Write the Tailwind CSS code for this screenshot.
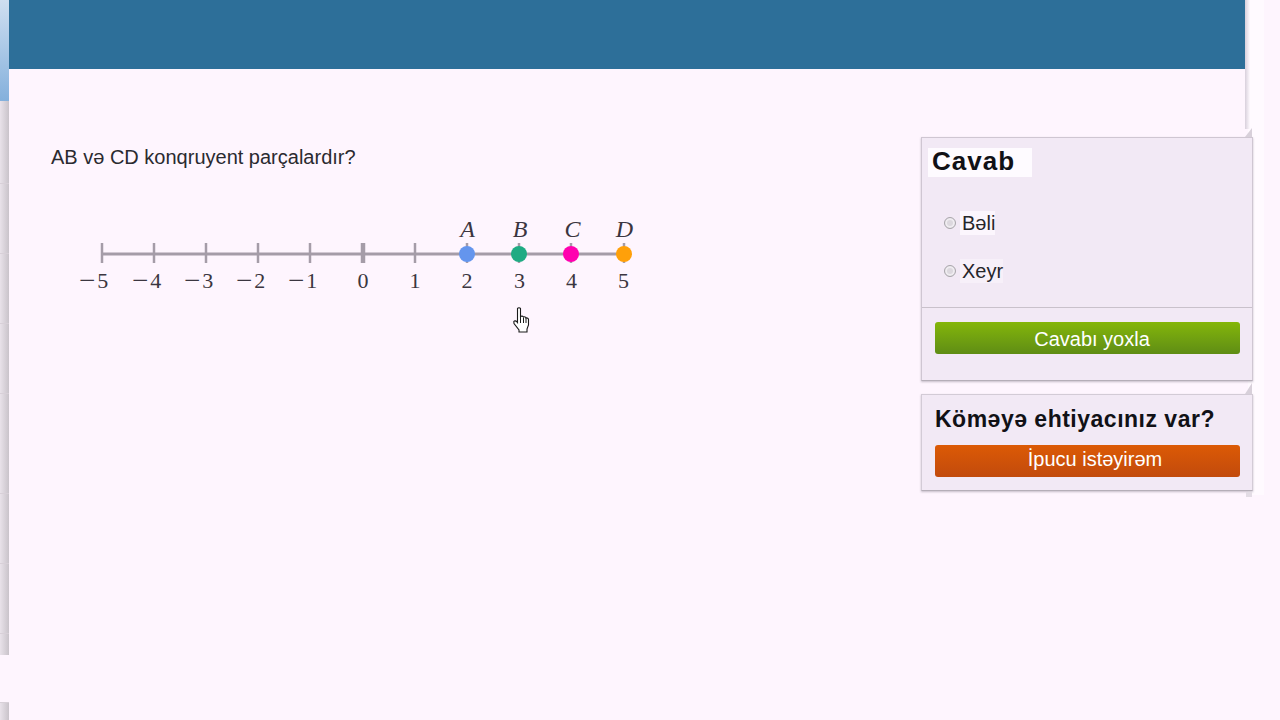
<!DOCTYPE html>
<html>
<head>
<meta charset="utf-8">
<script src="https://cdn.jsdelivr.net/npm/@tailwindcss/browser@4"></script>
</head>
<body class="w-[1280px] h-[720px] overflow-hidden bg-[#fef5fe] font-['Liberation_Sans',sans-serif]">
<div class="flex h-[720px] relative">
  <div class="absolute left-[1248px] top-0 w-[16px] h-[495px] bg-[#fffaff]"></div>
  <!-- left strip -->
  <div class="w-[9px] h-[720px] shrink-0 flex flex-col">
    <div class="h-[101px] bg-gradient-to-b from-[#cfdff0] to-[#84b0dc]"></div>
    <div class="h-[83px] border-b border-[#d8d0d8] bg-gradient-to-r from-[#e9e2ea] to-[#c9c3ca]"></div>
    <div class="h-[70px] border-b border-[#d8d0d8] bg-gradient-to-r from-[#e9e2ea] to-[#c9c3ca]"></div>
    <div class="h-[70px] border-b border-[#d8d0d8] bg-gradient-to-r from-[#e9e2ea] to-[#c9c3ca]"></div>
    <div class="h-[70px] border-b border-[#d8d0d8] bg-gradient-to-r from-[#e9e2ea] to-[#c9c3ca]"></div>
    <div class="h-[100px] border-b border-[#d8d0d8] bg-gradient-to-r from-[#e9e2ea] to-[#c9c3ca]"></div>
    <div class="h-[70px] border-b border-[#d8d0d8] bg-gradient-to-r from-[#e9e2ea] to-[#c9c3ca]"></div>
    <div class="h-[70px] border-b border-[#d8d0d8] bg-gradient-to-r from-[#e9e2ea] to-[#c9c3ca]"></div>
    <div class="h-[21px] bg-gradient-to-r from-[#e9e2ea] to-[#c9c3ca]"></div>
    <div class="h-[47px] bg-[#fef5fe]"></div>
    <div class="h-[18px] border-t border-[#d8d0d8] bg-gradient-to-r from-[#e9e2ea] to-[#c9c3ca]"></div>
  </div>
  <!-- main column -->
  <div class="w-[1236px] shrink-0 relative">
    <div class="h-[69px] bg-[#2d6f99]"></div>
    <div class="flex">
      <div class="w-[912px] shrink-0 pl-[42px] pt-[77px]">
        <p class="text-[20px] leading-[22px] text-[#2a2a30]">AB və CD konqruyent parçalardır?</p>
        <svg class="mt-[31px] -ml-[51px] block" width="700" height="100" viewBox="0 0 700 100">
          <g stroke="#a59ca8" fill="none">
            <line x1="101" y1="55" x2="624" y2="55" stroke-width="3"/>
            <g stroke-width="2.500">
              <line x1="102" y1="44" x2="102" y2="64"/>
              <line x1="154" y1="44" x2="154" y2="64"/>
              <line x1="206" y1="44" x2="206" y2="64"/>
              <line x1="258" y1="44" x2="258" y2="64"/>
              <line x1="310" y1="44" x2="310" y2="64"/>
              <line x1="415" y1="44" x2="415" y2="64"/>
              <line x1="467" y1="44" x2="467" y2="64"/>
              <line x1="519" y1="44" x2="519" y2="64"/>
              <line x1="571" y1="44" x2="571" y2="64"/>
              <line x1="624" y1="44" x2="624" y2="64"/>
            </g>
            <line x1="363" y1="44" x2="363" y2="64" stroke-width="4.500"/>
          </g>
          <circle cx="467" cy="55" r="8" fill="#6495ed"/>
          <circle cx="519" cy="55" r="8" fill="#1fab83"/>
          <circle cx="571" cy="55" r="8" fill="#ff00af"/>
          <circle cx="624" cy="55" r="8" fill="#ffa00a"/>
          <g font-family="'Liberation Serif',serif" font-size="22" fill="#3b3640">
            <text x="79" y="89"><tspan font-size="29" dy="2">−</tspan><tspan dx="2" dy="-2">5</tspan></text>
            <text x="132" y="89"><tspan font-size="29" dy="2">−</tspan><tspan dx="2" dy="-2">4</tspan></text>
            <text x="184" y="89"><tspan font-size="29" dy="2">−</tspan><tspan dx="2" dy="-2">3</tspan></text>
            <text x="236" y="89"><tspan font-size="29" dy="2">−</tspan><tspan dx="2" dy="-2">2</tspan></text>
            <text x="288" y="89"><tspan font-size="29" dy="2">−</tspan><tspan dx="2" dy="-2">1</tspan></text>
            <g text-anchor="middle">
              <text x="363" y="89">0</text>
              <text x="415" y="89">1</text>
              <text x="467" y="89">2</text>
              <text x="519.500" y="89">3</text>
              <text x="571.500" y="89">4</text>
              <text x="623.500" y="89">5</text>
              <g font-style="italic" font-size="24">
                <text x="467.500" y="38">A</text>
                <text x="520" y="38">B</text>
                <text x="572.500" y="38">C</text>
                <text x="624.500" y="38">D</text>
              </g>
            </g>
          </g>
        </svg>
      </div>
      <!-- sidebar -->
      <div class="w-[332px] shrink-0 pt-[68px] relative">
        <section class="relative h-[244px] border border-[#cfc6d2] border-b-[#b5aeb8] bg-[#f2e9f5] shadow-[0_1px_2px_rgba(90,80,100,0.35)]">
          <div class="absolute -top-[10px] right-0 w-0 h-0 border-l-[7px] border-l-transparent border-b-[9px] border-b-[#d8d0da]"></div>
          <h2 class="ml-[6px] mt-[10px] w-[104px] h-[29px] bg-[#fefbff] pl-[4px] text-[26px] leading-[27px] font-bold tracking-[1px] text-[#111116]">Cavab</h2>
          <div class="mt-[32px] ml-[22px] flex items-center gap-[6px] h-[28px]">
            <span class="w-[12px] h-[12px] rounded-full border border-[#a9a6ab] bg-[#dcd8de] shadow-[inset_0_0_0_2px_#efecf0]"></span>
            <span class="bg-[#fcf6fd] -ml-[2px] pl-[2px] text-[20px] leading-[24px] text-[#26262b]">Bəli</span>
          </div>
          <div class="mt-[20px] ml-[22px] flex items-center gap-[6px] h-[28px]">
            <span class="w-[12px] h-[12px] rounded-full border border-[#a9a6ab] bg-[#dcd8de] shadow-[inset_0_0_0_2px_#efecf0]"></span>
            <span class="bg-[#f7f0f9] -ml-[2px] pl-[2px] text-[20px] leading-[24px] text-[#26262b]">Xeyr</span>
          </div>
          <div class="mt-[22px] border-t border-[#c9c1cb]"></div>
          <div class="px-[13px] pt-[14px]">
            <button class="block w-[305px] h-[32px] rounded-[3px] bg-gradient-to-b from-[#84b608] to-[#5f8d14] text-white text-[20px] leading-[34px] text-center pl-[9px]">Cavabı yoxla</button>
          </div>
        </section>
        <section class="relative mt-[13px] h-[97px] border border-[#d3cbd6] border-b-[#b5aeb8] bg-[#f2e9f5] shadow-[0_1px_2px_rgba(90,80,100,0.35)]">
          <div class="absolute -top-[12px] right-0 w-0 h-0 border-l-[7px] border-l-transparent border-b-[11px] border-b-[#d8d0da]"></div>
          <div class="absolute -bottom-[7px] right-0 w-[6px] h-[5px] bg-[#e3dce5]"></div>
          <h2 class="ml-[13px] mt-[10px] text-[23px] leading-[28px] font-bold tracking-[0.5px] text-[#111116]">Köməyə ehtiyacınız var?</h2>
          <div class="px-[13px] pt-[12px]">
            <button class="block w-[305px] h-[32px] rounded-[3px] bg-gradient-to-b from-[#dc5a05] to-[#c24a0c] text-white text-[20px] leading-[28px] text-center pl-[15px] pb-[4px]">İpucu istəyirəm</button>
          </div>
        </section>
      </div>
    </div>
  </div>
  <div class="absolute left-[1245px] top-0 w-[5px] h-[129px] bg-gradient-to-r from-[#d8d0dc] to-[#fffaff]"></div>
  <div class="absolute left-[513px] top-[307px]">
    <svg width="17" height="26" viewBox="0 0 17 26">
      <path d="M4.500 1.500 C5 0.500 7 0.500 7.500 1.500 L7.500 9.500 C8.500 8.800 10 9 10.500 10 C11.500 9.500 12.800 10 13 11 C14.200 10.500 15.500 11.500 15.500 12.500 L15.500 18 L14 22 L14 25 L6 25 L6 23 L1 16.500 L0.800 14.500 C1.500 13.500 3 13.500 4.500 15.500 Z" fill="#fff" stroke="#1a1a1a" stroke-width="1.100"/>
      <path d="M7.500 10 V16 M10.500 10.500 V16 M13 11 V16" stroke="#1a1a1a" fill="none"/>
    </svg>
  </div>
</div>
</body>
</html>
